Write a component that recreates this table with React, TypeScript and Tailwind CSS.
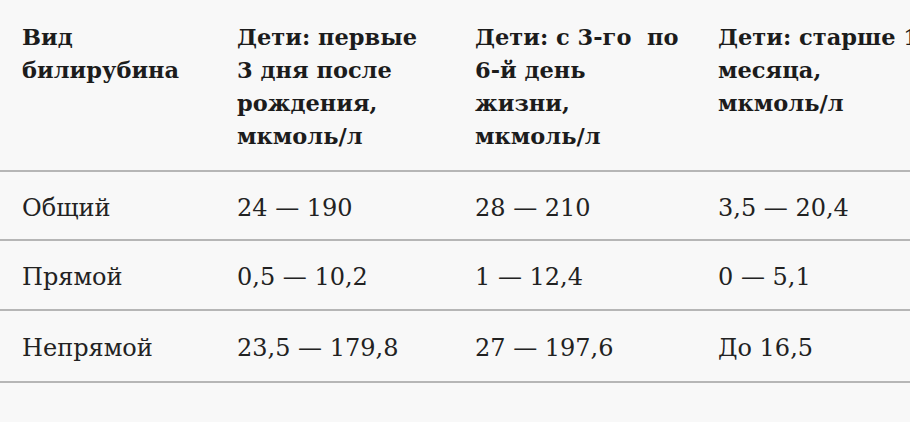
const head = [
  ["Вид", "билирубина"],
  ["Дети: первые", "3 дня после", "рождения,", "мкмоль/л"],
  ["Дети: с 3-го  по", "6-й день", "жизни,", "мкмоль/л"],
  ["Дети: старше 1", "месяца,", "мкмоль/л"],
];

const rows = [
  { h: "h-[69px]", cells: ["Общий", "24 — 190", "28 — 210", "3,5 — 20,4"] },
  { h: "h-[70px]", cells: ["Прямой", "0,5 — 10,2", "1 — 12,4", "0 — 5,1"] },
  { h: "h-[72px]", cells: ["Непрямой", "23,5 — 179,8", "27 — 197,6", "До 16,5"] },
];

const cols = ["w-[215px]", "w-[238px]", "w-[243px]", "w-[260px]"];

export default function App() {
  return (
    <div
      className="h-[422px] w-[910px] overflow-hidden bg-[#f8f8f8]"
      style={{ fontFamily: '"DejaVu Serif", serif' }}
    >
      <div className="w-[956px]">
        <div className="flex h-[172px] border-b-2 border-[#b6b6b6]">
          {head.map((lines, i) => (
            <div
              key={i}
              className={`${cols[i]} shrink-0 pl-[22px] pt-[21px] text-[22.5px] font-bold leading-[33px] text-[#1c1c1c]`}
            >
              {lines.map((l) => (
                <div key={l} className="whitespace-pre">
                  {l}
                </div>
              ))}
            </div>
          ))}
        </div>
        {rows.map((r) => (
          <div
            key={r.cells[0]}
            className={`flex ${r.h} items-center border-b-2 border-[#b6b6b6] pt-[4px]`}
          >
            {r.cells.map((c, i) => (
              <div
                key={i}
                className={`${cols[i]} shrink-0 pl-[22px] text-[24px] text-[#222222]`}
              >
                {c}
              </div>
            ))}
          </div>
        ))}
      </div>
    </div>
  );
}
